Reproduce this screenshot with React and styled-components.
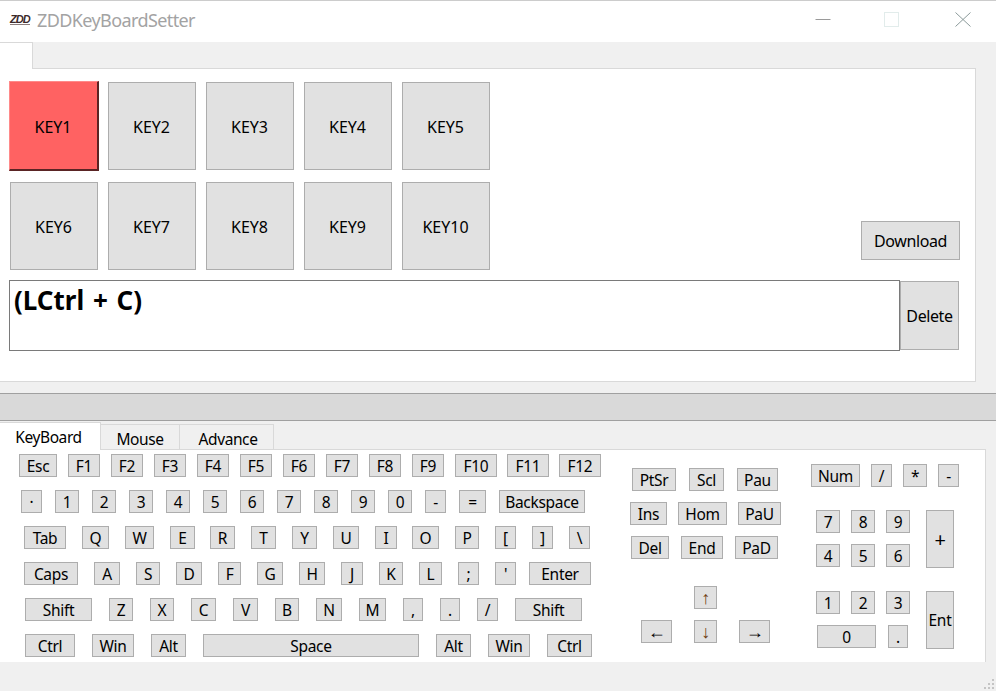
import React from "react";
import styled, { createGlobalStyle } from "styled-components";

const GlobalStyle = createGlobalStyle`
    html, body {
        margin: 0;
        padding: 0;
        background: #f0f0f0;
        overflow: hidden;
    }
    * {
        box-sizing: border-box;
    }
`;

const FONT = `"Noto Sans", "Open Sans", "DejaVu Sans", sans-serif`;

const Window = styled.div`
    width: 996px;
    height: 691px;
    position: relative;
    display: flex;
    flex-direction: column;
    background: #f0f0f0;
    border-top: 1px solid #cccccc;
    font-family: ${FONT};
    color: #000;
`;

const TitleBar = styled.div`
    height: 41px;
    flex: none;
    display: flex;
    align-items: center;
    background: #fff;
    padding: 0 0 4px 10px;
`;

const Logo = styled.span`
    width: 20px;
    height: 10px;
    font: italic 900 11px/9px "Liberation Sans", sans-serif;
    letter-spacing: -1px;
    color: #3b2a2a;
    border-bottom: 1px solid #8a7c7c;
    white-space: nowrap;
`;

const Title = styled.span`
    margin-left: 7px;
    font-size: 18px;
    letter-spacing: -0.6px;
    color: #a3a3a3;
`;

const WindowControls = styled.div`
    margin-left: auto;
    display: flex;
    align-items: center;
    padding-right: 25px;
    gap: 53px;
`;

const TopTabs = styled.div`
    height: 26px;
    flex: none;
`;

const BlankTab = styled.div`
    width: 33px;
    height: 27px;
    background: #fff;
    border-top: 1px solid #d9d9d9;
    border-right: 1px solid #d9d9d9;
    position: relative;
    z-index: 1;
`;

const Panel = styled.div`
    width: 976px;
    height: 314px;
    flex: none;
    background: #fff;
    border: 1px solid #d9d9d9;
    border-left: none;
    padding: 13px 15px 0 10px;
`;

const KeyArea = styled.div`
    display: flex;
    justify-content: space-between;
    align-items: flex-end;
`;

const KeyGrid = styled.div`
    display: grid;
    grid-template-columns: repeat(5, 88px);
    grid-auto-rows: 88px;
    column-gap: 10px;
    row-gap: 12px;
`;

const MacroKey = styled.button`
    font: 16px ${FONT};
    color: #000;
    padding: 2px 1px 0 0;
    background: ${(props) => (props.$active ? "#ff6262" : "#e1e1e1")};
    border: 1px solid #adadad;
    ${(props) =>
        props.$active &&
        `
        margin: -1px;
        width: 90px;
        height: 90px;
        border-color: #ff8a8a #5a2424 #5a2424 #ff8a8a;
        border-width: 1px 2px 2px 1px;
    `}
`;

const ActionButton = styled.button`
    font: 16px ${FONT};
    letter-spacing: -0.4px;
    color: #000;
    padding: 0;
    background: #e1e1e1;
    border: 1px solid #adadad;
    width: ${(props) => props.$w}px;
    height: ${(props) => props.$h}px;
`;

const DownloadWrap = styled.div`
    margin-bottom: 10px;
`;

const EditorRow = styled.div`
    display: flex;
    align-items: center;
    margin: 10px 0 0 -1px;
`;

const Editor = styled.div`
    width: 891px;
    height: 71px;
    border: 1px solid #7a7a7a;
    padding: 0 4px;
    font-size: 26px;
    font-weight: 700;
    line-height: 38px;
    word-spacing: 2px;
`;

const Gap = styled.div`
    height: 11px;
    flex: none;
`;

const Splitter = styled.div`
    height: 28px;
    flex: none;
    background: #d9d9d9;
    border-top: 1px solid #a0a0a0;
    border-bottom: 1px solid #a0a0a0;
`;

const TabStrip = styled.div`
    height: 29px;
    flex: none;
    width: 986px;
    display: flex;
    align-items: flex-end;
    padding-top: 2px;
    border-bottom: 1px solid #d9d9d9;
`;

const Tab = styled.div`
    height: ${(props) => (props.$active ? 28 : 25)}px;
    width: ${(props) => props.$w}px;
    margin-bottom: ${(props) => (props.$active ? -1 : 0)}px;
    background: ${(props) => (props.$active ? "#fff" : "#f0f0f0")};
    border-top: 1px solid #d9d9d9;
    border-right: 1px solid #d9d9d9;
    font-size: 15.5px;
    letter-spacing: -0.4px;
    line-height: 24px;
    padding: 2px ${(props) => props.$pr || 0}px 0 ${(props) => props.$pl || 0}px;
    text-align: center;
    position: relative;
    white-space: nowrap;
`;

const Pane = styled.div`
    width: 986px;
    height: 212px;
    flex: none;
    background: #fff;
    border-right: 1px solid #d9d9d9;
    padding-top: 4px;
    display: flex;
`;

const MainKeys = styled.div`
    width: 620px;
    flex: none;
    display: flex;
    flex-direction: column;
    gap: 13px;
`;

const NavKeys = styled.div`
    width: 180px;
    flex: none;
    padding-top: 14px;
    display: flex;
    flex-direction: column;
    gap: 11px;
`;

const ArrowGap = styled.div`
    height: 5px;
`;

const NumPad = styled.div`
    padding-top: 10px;
`;

const PadBody = styled.div`
    display: flex;
    margin-top: 23px;
`;

const PadDigits = styled.div`
    width: 110px;
    display: flex;
    flex-direction: column;
    gap: 11px;
`;

const PadSpacer = styled.div`
    height: 2px;
`;

const PadTall = styled.div`
    margin-left: 16px;
    display: flex;
    flex-direction: column;
    gap: 23px;
`;

const Row = styled.div`
    display: flex;
    height: 23px;
`;

const Key = styled.button`
    flex: none;
    width: ${(props) => props.$w}px;
    height: ${(props) => props.$h || 23}px;
    margin-left: ${(props) => props.$gap || 0}px;
    padding: 2px 0 0;
    font: ${(props) => props.$size || 15.5}px/1 ${FONT};
    letter-spacing: -0.3px;
    color: #000;
    background: #e1e1e1;
    border: 1px solid #adadad;
    white-space: nowrap;
`;

const ArrowKey = styled(Key)`
    font: 18px/1 "Liberation Sans", sans-serif;
    color: ${(props) => props.$color || "#000"};
    padding: 0;
`;

const Grip = styled.svg`
    position: absolute;
    right: 1px;
    bottom: 1px;
`;

const macroKeys = ["KEY1", "KEY2", "KEY3", "KEY4", "KEY5", "KEY6", "KEY7", "KEY8", "KEY9", "KEY10"];

// [label, gap before, width]
const mainRows = [
    [["Esc", 19, 38], ["F1", 11, 32], ["F2", 11, 32], ["F3", 11, 32], ["F4", 11, 32], ["F5", 11, 32], ["F6", 11, 32], ["F7", 11, 32], ["F8", 11, 32], ["F9", 11, 32], ["F10", 11, 42], ["F11", 10, 42], ["F12", 10, 42]],
    [["·", 21, 21], ["1", 13, 24], ["2", 13, 24], ["3", 13, 24], ["4", 13, 24], ["5", 13, 24], ["6", 13, 24], ["7", 13, 24], ["8", 13, 24], ["9", 13, 24], ["0", 13, 24], ["-", 13, 21], ["=", 13, 27], ["Backspace", 13, 86]],
    [["Tab", 24, 42], ["Q", 16, 27], ["W", 16, 29], ["E", 16, 25], ["R", 15, 25], ["T", 16, 25], ["Y", 16, 25], ["U", 16, 26], ["I", 16, 22], ["O", 15, 27], ["P", 16, 24], ["[", 16, 21], ["]", 16, 21], ["\\", 16, 21]],
    [["Caps", 24, 54], ["A", 16, 26], ["S", 16, 24], ["D", 16, 26], ["F", 16, 23], ["G", 16, 26], ["H", 16, 26], ["J", 16, 22], ["K", 16, 24], ["L", 16, 23], [";", 16, 21], ["'", 16, 21], ["Enter", 13, 62]],
    [["Shift", 25, 67], ["Z", 17, 24], ["X", 17, 24], ["C", 17, 25], ["V", 17, 25], ["B", 17, 24], ["N", 17, 26], ["M", 17, 27], [",", 17, 20], [".", 17, 20], ["/", 17, 21], ["Shift", 17, 67]],
    [["Ctrl", 25, 50], ["Win", 17, 42], ["Alt", 17, 35], ["Space", 17, 216], ["Alt", 17, 35], ["Win", 17, 42], ["Ctrl", 17, 45]],
];

const navRows = [
    [["PtSr", 12, 44], ["Scl", 13, 35], ["Pau", 13, 41]],
    [["Ins", 10, 37], ["Hom", 11, 49], ["PaU", 11, 43]],
    [["Del", 11, 38], ["End", 12, 42], ["PaD", 12, 43]],
];

const arrowRows = [
    [["↑", 74, 23, "#6e3f10"]],
    [["←", 21, 31], ["↓", 22, 23, "#6e3f10"], ["→", 22, 31]],
];

const padTop = [["Num", 11, 49], ["/", 11, 21], ["*", 11, 24], ["-", 11, 21]];
const digits = [
    [["7", 16, 24], ["8", 11, 24], ["9", 11, 24]],
    [["4", 16, 24], ["5", 11, 24], ["6", 11, 24]],
];
const digitsLow = [
    [["1", 16, 24], ["2", 11, 24], ["3", 11, 24]],
    [["0", 17, 59], [".", 12, 20]],
];

function KeyRow({ keys, item: Item = Key }) {
    return (
        <Row>
            {keys.map(([label, gap, width, color], index) => (
                <Item key={index} $gap={gap} $w={width} $color={color}>
                    {label}
                </Item>
            ))}
        </Row>
    );
}

function App() {
    return (
        <>
            <GlobalStyle />
            <Window>
                <TitleBar>
                    <Logo>ZDD</Logo>
                    <Title>ZDDKeyBoardSetter</Title>
                    <WindowControls>
                        <svg width="16" height="15" viewBox="0 0 16 15">
                            <path d="M0.5 7.5H15.5" stroke="#9a9a9a" strokeWidth="1" />
                        </svg>
                        <svg width="15" height="15" viewBox="0 0 15 15">
                            <rect x="0.5" y="0.5" width="14" height="14" fill="none" stroke="#e2eceb" />
                        </svg>
                        <svg width="19" height="15" viewBox="0 0 19 15">
                            <path d="M3.5 0.5L18.5 14.5M18.5 0.5L3.5 14.5" stroke="#8b9a9a" strokeWidth="1" />
                        </svg>
                    </WindowControls>
                </TitleBar>
                <TopTabs>
                    <BlankTab />
                </TopTabs>
                <Panel>
                    <KeyArea>
                        <KeyGrid>
                            {macroKeys.map((name, index) => (
                                <MacroKey key={name} $active={index === 0}>
                                    {name}
                                </MacroKey>
                            ))}
                        </KeyGrid>
                        <DownloadWrap>
                            <ActionButton $w={99} $h={39}>Download</ActionButton>
                        </DownloadWrap>
                    </KeyArea>
                    <EditorRow>
                        <Editor>(LCtrl + C)</Editor>
                        <ActionButton $w={59} $h={69}>Delete</ActionButton>
                    </EditorRow>
                </Panel>
                <Gap />
                <Splitter />
                <TabStrip>
                    <Tab $active $w={101} $pr={3}>KeyBoard</Tab>
                    <Tab $w={79}>Mouse</Tab>
                    <Tab $w={94} $pl={3}>Advance</Tab>
                </TabStrip>
                <Pane>
                    <MainKeys>
                        {mainRows.map((keys, index) => (
                            <KeyRow key={index} keys={keys} />
                        ))}
                    </MainKeys>
                    <NavKeys>
                        {navRows.map((keys, index) => (
                            <KeyRow key={index} keys={keys} />
                        ))}
                        <ArrowGap />
                        {arrowRows.map((keys, index) => (
                            <KeyRow key={index} keys={keys} item={ArrowKey} />
                        ))}
                    </NavKeys>
                    <NumPad>
                        <KeyRow keys={padTop} />
                        <PadBody>
                            <PadDigits>
                                {digits.map((keys, index) => (
                                    <KeyRow key={index} keys={keys} />
                                ))}
                                <PadSpacer />
                                {digitsLow.map((keys, index) => (
                                    <KeyRow key={index} keys={keys} />
                                ))}
                            </PadDigits>
                            <PadTall>
                                <Key $w={28} $h={58} $size={20}>+</Key>
                                <Key $w={28} $h={58}>Ent</Key>
                            </PadTall>
                        </PadBody>
                    </NumPad>
                </Pane>
                <Grip width="11" height="11" viewBox="0 0 11 11">
                    <path d="M8 0h2v2H8zM8 4h2v2H8zM4 4h2v2H4zM8 8h2v2H8zM4 8h2v2H4zM0 8h2v2H0z" fill="#c4c4c4" />
                </Grip>
            </Window>
        </>
    );
}

export default App;
